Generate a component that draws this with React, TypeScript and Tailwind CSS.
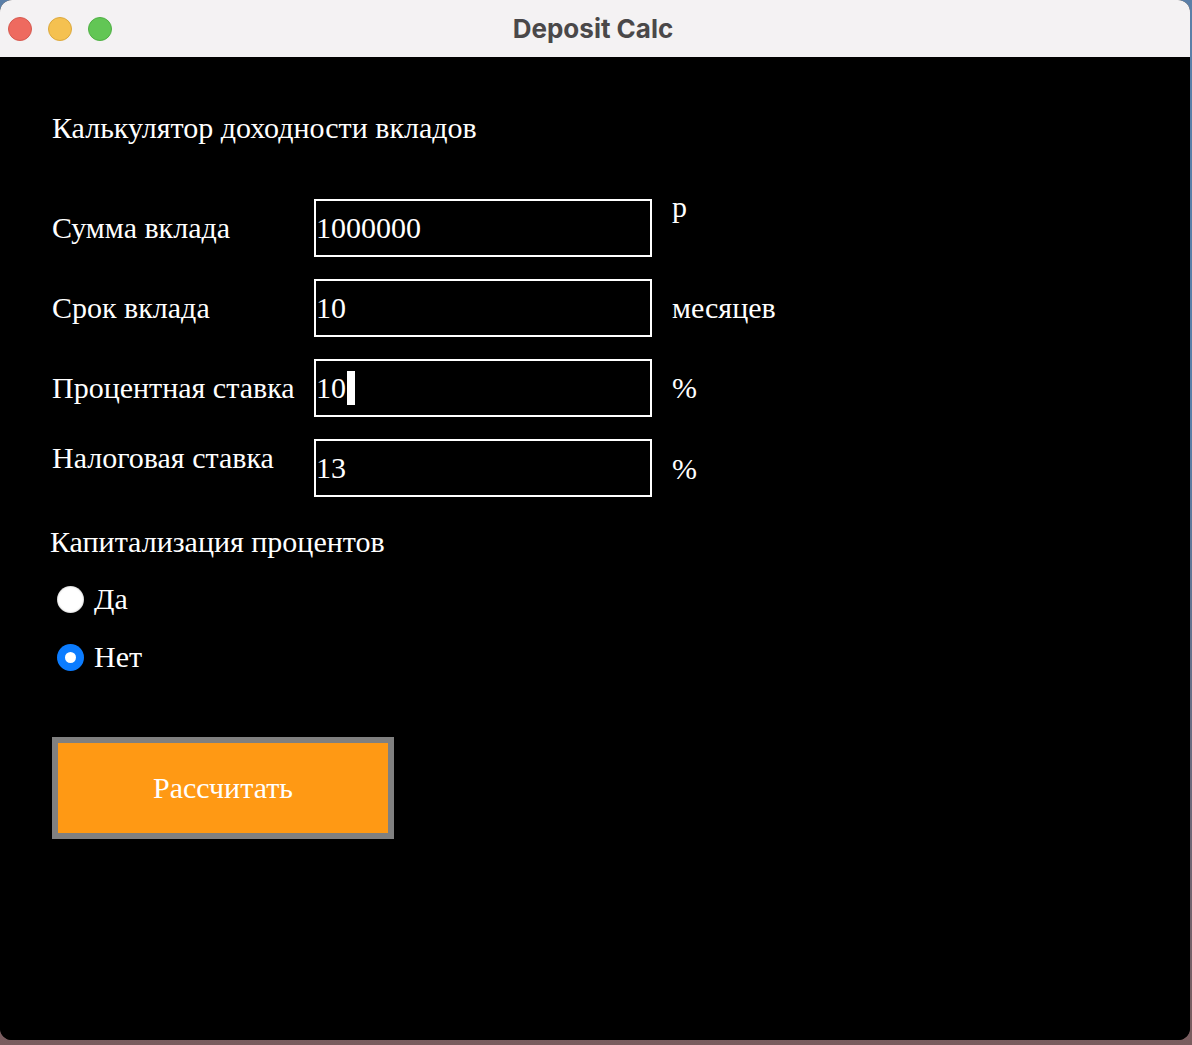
import React from "react";

const serif = { fontFamily: '"Liberation Serif", "Times New Roman", serif' };

function Row({ label, value, unit, labelOffset, unitOffset, unitTop, caret }: { label: string; value: string; unit: string; labelOffset: string; unitOffset: string; unitTop?: boolean; caret?: boolean }) {
  return (
    <div className="flex h-[58px]">
      <div className={`w-[262px] flex items-center ${labelOffset}`}>
        <span className="text-[30px] leading-none text-white whitespace-nowrap">{label}</span>
      </div>
      <div className="w-[338px] h-[58px] border-2 border-white flex items-center">
        <span className="text-[30px] leading-none text-white whitespace-nowrap flex items-center">
          {value}
          {caret && <span className="inline-block w-[8px] h-[34px] bg-white ml-[1px]" />}
        </span>
      </div>
      <div className={`ml-[20px] flex ${unitTop ? "items-start" : "items-center"} ${unitOffset}`}>
        <span className="text-[30px] leading-none text-white whitespace-nowrap">{unit}</span>
      </div>
    </div>
  );
}

function Radio({ checked, label }: { checked: boolean; label: string }) {
  return (
    <div className="flex items-center h-[30px]">
      <div className="w-[28px] flex justify-center">
        {checked ? (
          <div className="w-[27px] h-[27px] rounded-full bg-[#0b7cff] flex items-center justify-center shadow-[0_0_1px_rgba(0,0,0,0.5)]">
            <div className="w-[11px] h-[11px] rounded-full bg-white" />
          </div>
        ) : (
          <div className="w-[27px] h-[27px] rounded-full bg-white shadow-[inset_0_0_2px_rgba(0,0,0,0.4)]" />
        )}
      </div>
      <span className="ml-[10px] text-[30px] leading-none text-white">{label}</span>
    </div>
  );
}

export default function App() {
  return (
    <div className="w-[1192px] h-[1045px] bg-[linear-gradient(180deg,#5b7fa8_0%,#5b7fa8_40%,#7a5c5e_100%)] overflow-hidden">
      <div className="w-[1190px] h-[1040px] rounded-[12px] overflow-hidden flex flex-col bg-black">
        <div className="h-[57px] bg-[#f4f2f3] relative flex items-center justify-center shrink-0">
          <div className="absolute left-[8px] top-[17px] flex gap-[16px]">
            <div className="w-[24px] h-[24px] rounded-full bg-[#ee6a5f] border border-[#d65a50]" />
            <div className="w-[24px] h-[24px] rounded-full bg-[#f5c150] border border-[#dca93d]" />
            <div className="w-[24px] h-[24px] rounded-full bg-[#62c655] border border-[#4fb044]" />
          </div>
          <span className="text-[26px] font-bold text-[#4a4849] pr-[4px]" style={{ fontFamily: "Inter, Roboto, sans-serif" }}>Deposit Calc</span>
        </div>
        <div className="flex-1 bg-black pl-[52px] pt-[56px]" style={serif}>
          <div className="text-[30px] leading-none text-white whitespace-nowrap">Калькулятор доходности вкладов</div>
          <div className="mt-[56px] flex flex-col gap-[22px]">
            <Row label="Сумма вклада" value="1000000" unit="р" labelOffset="-mt-[1px]" unitOffset="-mt-[7px]" unitTop />
            <Row label="Срок вклада" value="10" unit="месяцев" labelOffset="" unitOffset="" />
            <Row label="Процентная ставка" value="10" unit="%" labelOffset="" unitOffset="" caret />
            <Row label="Налоговая ставка" value="13" unit="%" labelOffset="-mt-[20px]" unitOffset="mt-[2px]" />
          </div>
          <div className="mt-[30px] -ml-[2px] text-[30px] leading-none text-white whitespace-nowrap">Капитализация процентов</div>
          <div className="mt-[27px] ml-[4px] flex flex-col gap-[28px]">
            <Radio checked={false} label="Да" />
            <Radio checked={true} label="Нет" />
          </div>
          <button className="mt-[65px] w-[342px] h-[102px] border-[6px] border-[#808080] bg-[#ff9914] flex items-center justify-center">
            <span className="text-[30px] leading-none text-white" style={serif}>Рассчитать</span>
          </button>
        </div>
      </div>
    </div>
  );
}
